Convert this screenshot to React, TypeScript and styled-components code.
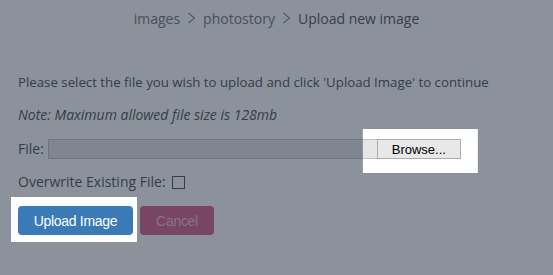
import React, { useLayoutEffect, useRef, useState } from "react";
import styled, { createGlobalStyle } from "styled-components";

const GlobalStyle = createGlobalStyle`
  body {
    margin: 0;
    background: #ffffff;
    font-family: "Open Sans", "Liberation Sans", sans-serif;
    color: #555555;
  }
`;

interface IPad {
  t: number;
  r: number;
  b: number;
  l: number;
}

const App = () => {
  const browseRef = useRef<HTMLButtonElement>(null);
  const uploadRef = useRef<HTMLButtonElement>(null);
  const [clip, setClip] = useState("none");

  useLayoutEffect(() => {
    const targets: { el: HTMLElement | null; pad: IPad }[] = [
      { el: browseRef.current, pad: { t: 10, r: 17, b: 14, l: 14 } },
      { el: uploadRef.current, pad: { t: 9, r: 4, b: 7, l: 7 } },
    ];
    const w = window.innerWidth;
    const h = window.innerHeight;
    let d = `M0 0H${w}V${h}H0Z`;
    targets.forEach(({ el, pad }) => {
      if (!el) return;
      const r = el.getBoundingClientRect();
      const x1 = r.left - pad.l;
      const y1 = r.top - pad.t;
      const x2 = r.right + pad.r;
      const y2 = r.bottom + pad.b;
      d += ` M${x1} ${y1}H${x2}V${y2}H${x1}Z`;
    });
    setClip(`path(evenodd, "${d}")`);
  }, []);

  return (
    <>
      <GlobalStyle />
      <Page>
        <Breadcrumb>
          <Crumb>images</Crumb>
          <Chevron />
          <Crumb>photostory</Crumb>
          <Chevron />
          <Crumb $current>Upload new image</Crumb>
        </Breadcrumb>

        <Intro>
          Please select the file you wish to upload and click 'Upload Image' to
          continue
        </Intro>
        <Note>Note: Maximum allowed file size is 128mb</Note>

        <FileRow>
          <Label>File:</Label>
          <FileField />
          <BrowseButton ref={browseRef}>Browse...</BrowseButton>
        </FileRow>

        <CheckRow>
          <Label>Overwrite Existing File:</Label>
          <Check type="checkbox" />
        </CheckRow>

        <Actions>
          <Button ref={uploadRef} $variant="primary">
            Upload Image
          </Button>
          <Button $variant="cancel">Cancel</Button>
        </Actions>
      </Page>
      <Overlay style={{ clipPath: clip }} />
    </>
  );
};

const Chevron = () => (
  <svg width="9" height="12" viewBox="0 0 9 12">
    <polyline
      points="1.5,1 7.5,6 1.5,11"
      fill="none"
      stroke="#8a8a8a"
      strokeWidth="1.1"
    />
  </svg>
);

const Page = styled.div`
  padding: 0 18px;
`;

const Breadcrumb = styled.div`
  display: flex;
  justify-content: center;
  align-items: center;
  gap: 7px;
  height: 36px;
  font-size: 14px;
`;

const Crumb = styled.span<{ $current?: boolean }>`
  color: ${(p) => (p.$current ? "#5a5568" : "#7a7a7a")};
`;

const Intro = styled.p`
  margin: 36px 0 0;
  font-size: 13.25px;
  line-height: 20px;
`;

const Note = styled.p`
  margin: 13px 0 0;
  font-size: 14px;
  line-height: 20px;
  font-style: italic;
`;

const FileRow = styled.div`
  display: flex;
  align-items: center;
  margin-top: 14px;
  height: 20px;
`;

const Label = styled.span`
  font-size: 14px;
  line-height: 20px;
`;

const FileField = styled.div`
  width: 328px;
  height: 18px;
  margin-left: 4px;
  background: #e6e6e6;
  border: 1px solid #c4c4c4;
  border-right: none;
`;

const BrowseButton = styled.button`
  box-sizing: border-box;
  width: 84px;
  height: 20px;
  padding: 0;
  background: #e8e8e8;
  border: 1px solid #adadad;
  font-family: "Liberation Sans", Arial, sans-serif;
  font-size: 13px;
  color: #000;
`;

const CheckRow = styled.div`
  display: flex;
  align-items: center;
  gap: 6px;
  margin-top: 13px;
  height: 20px;
`;

const Check = styled.input`
  appearance: none;
  margin: 0;
  width: 13px;
  height: 13px;
  background: #fff;
  border: 1px solid #555;
  box-sizing: border-box;
`;

const Actions = styled.div`
  display: flex;
  gap: 7px;
  margin-top: 14px;
`;

const Button = styled.button<{ $variant: "primary" | "cancel" }>`
  box-sizing: border-box;
  height: 29px;
  padding: 0;
  width: ${(p) => (p.$variant === "primary" ? "115px" : "74px")};
  border: none;
  border-radius: 4px;
  font-family: "Liberation Sans", Arial, sans-serif;
  font-size: 14px;
  letter-spacing: -0.3px;
  background: ${(p) => (p.$variant === "primary" ? "#3a7ab7" : "#d8648c")};
  color: ${(p) =>
    p.$variant === "primary" ? "#ffffff" : "rgba(255, 235, 245, 0.7)"};
`;

const Overlay = styled.div`
  position: fixed;
  inset: 0;
  background: rgba(23, 37, 55, 0.5);
  pointer-events: none;
`;

export default App;
